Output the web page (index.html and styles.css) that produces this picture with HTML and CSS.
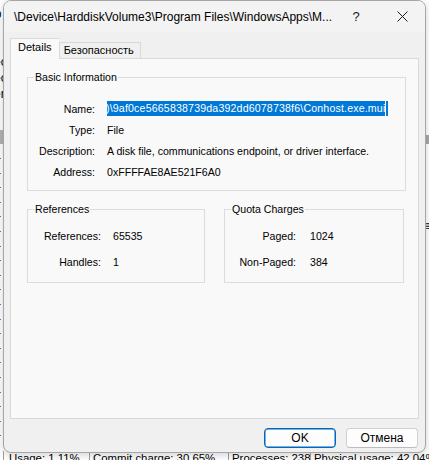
FILE: index.html
```html
<!DOCTYPE html>
<html>
<head>
<meta charset="utf-8">
<link rel="stylesheet" href="styles.css">
</head>
<body>
<div class="desk">
  <div class="app">
    <div class="applist">
      <div class="frag">op</div>
      <div class="frag">lo</div>
      <div class="frag">isl</div>
      <div class="frag">sec</div>
      <div class="frag">sec</div>
      <div class="frag">ver</div>
      <div class="selrow"></div>
      <div class="dots"></div>
    </div>
    <div class="rightstrip">
      <div class="rblock"></div>
      <div class="rglyph">≡</div>
    </div>
    <div class="status">
      <span class="seg s1">Usage: 1.11%</span>
      <span class="seg s2">Commit charge: 30.65%</span>
      <span class="seg s3">Processes: 238</span>
      <span class="seg s4">Physical usage: 42.04%</span>
    </div>
  </div>

  <div class="dialog">
    <div class="titlebar">
      <span class="title">\Device\HarddiskVolume3\Program Files\WindowsApps\M...</span>
      <span class="capbtn help">?</span>
      <span class="capbtn close">
        <svg width="11" height="11" viewBox="0 0 11 11"><path d="M0.5 0.5 L10.5 10.5 M10.5 0.5 L0.5 10.5" stroke="#1b1b1b" stroke-width="1" fill="none"/></svg>
      </span>
    </div>
    <div class="client">
      <div class="tabs">
        <div class="tab active">Details</div>
        <div class="tab">Безопасность</div>
      </div>
      <div class="panel">
        <fieldset class="group basic">
          <legend>Basic Information</legend>
          <div class="grid g-basic">
            <span class="lbl">Name:</span>
            <span class="val"><span class="sel"><span class="seltext">)\9af0ce5665838739da392dd6078738f6\Conhost.exe.mui</span></span></span>
            <span class="lbl">Type:</span>
            <span class="val">File</span>
            <span class="lbl">Description:</span>
            <span class="val">A disk file, communications endpoint, or driver interface.</span>
            <span class="lbl">Address:</span>
            <span class="val">0xFFFFAE8AE521F6A0</span>
          </div>
        </fieldset>
        <div class="pair">
          <fieldset class="group refs">
            <legend>References</legend>
            <div class="grid g-refs">
              <span class="lbl">References:</span>
              <span class="val">65535</span>
              <span class="lbl">Handles:</span>
              <span class="val">1</span>
            </div>
          </fieldset>
          <fieldset class="group quota">
            <legend>Quota Charges</legend>
            <div class="grid g-quota">
              <span class="lbl">Paged:</span>
              <span class="val">1024</span>
              <span class="lbl">Non-Paged:</span>
              <span class="val">384</span>
            </div>
          </fieldset>
        </div>
      </div>
      <div class="buttons">
        <button class="btn default">OK</button>
        <button class="btn">Отмена</button>
      </div>
    </div>
  </div>
</div>
</body>
</html>
```

FILE: styles.css
```css
html, body {
  margin: 0;
  padding: 0;
}
body {
  width: 429px;
  height: 460px;
  overflow: hidden;
  background: #ffffff;
  font-family: "Liberation Sans", Arial, sans-serif;
  font-size: 10.6px;
  color: #000;
}
.desk {
  position: relative;
  width: 429px;
  height: 460px;
  overflow: hidden;
}
.app {
  display: flex;
  flex-direction: column;
  width: 429px;
  height: 460px;
  position: relative;
}
.applist {
  width: 40px;
  height: 451px;
  flex: none;
  position: relative;
}
.frag {
  font-size: 12px;
  line-height: 16px;
  margin-left: -12px;
  white-space: nowrap;
}
.applist .frag:first-child {
  margin-top: 6px;
}
.selrow {
  position: absolute;
  left: 0;
  top: 130px;
  width: 4px;
  height: 14px;
  background: #b3b3b3;
}
.dots {
  position: absolute;
  left: 0;
  top: 158px;
  width: 1px;
  height: 290px;
  background: repeating-linear-gradient(to bottom, #2f86d6 0, #2f86d6 1px, transparent 1px, transparent 14.6px);
}
.rightstrip {
  position: absolute;
  right: 0;
  top: 0;
  width: 4px;
  height: 450px;
}
.rblock {
  position: absolute;
  left: 0;
  top: 135px;
  width: 4px;
  height: 9px;
  background: #a8a8a8;
}
.rglyph {
  position: absolute;
  left: 0;
  top: 219px;
  font-size: 12px;
  line-height: 14px;
}
.status {
  display: flex;
  align-items: flex-start;
  height: 9px;
  flex: none;
  font-family: "Liberation Sans", Arial, sans-serif;
  font-size: 11.4px;
  line-height: 14px;
  color: #000;
  white-space: nowrap;
  padding-left: 3px;
}
.seg {
  flex: none;
  overflow: hidden;
  height: 14px;
  box-sizing: border-box;
  border-right: 1px solid #a0a0a0;
}
.s1 { width: 87px; padding-left: 5px; border-left: 1px solid #a0a0a0; }
.s2 { width: 139px; padding-left: 3px; }
.s3 { width: 82px; padding-left: 3px; }
.s4 { width: 120px; padding-left: 3px; border-right: none; }

.dialog {
  position: absolute;
  left: 3px;
  top: 0;
  width: 421px;
  height: 451px;
  border: 1px solid #a6a6a6;
  border-radius: 8px;
  background: #f0f0f0;
  box-shadow: 0 2px 8px rgba(0,0,0,0.18);
  display: flex;
  flex-direction: column;
  overflow: hidden;
}
.titlebar {
  height: 31px;
  flex: none;
  display: flex;
  align-items: center;
  background: #f3f3f3;
}
.title {
  flex: 1;
  padding-left: 10px;
  font-size: 12px;
  white-space: nowrap;
  overflow: hidden;
  color: #000;
}
.capbtn {
  width: 46px;
  height: 31px;
  flex: none;
  display: flex;
  align-items: center;
  justify-content: center;
  color: #1b1b1b;
}
.help {
  font-size: 13px;
}
.client {
  flex: 1;
  display: flex;
  flex-direction: column;
  padding: 7px 6px 0 6px;
}
.tabs {
  display: flex;
  align-items: flex-end;
  height: 19px;
  position: relative;
  z-index: 2;
}
.tab {
  height: 15px;
  line-height: 15px;
  padding: 0 4px;
  border: 1px solid #d9d9d9;
  border-bottom: none;
  background: #f0f0f0;
  font-size: 11px;
  white-space: nowrap;
}
.tab.active {
  height: 20px;
  line-height: 17px;
  background: #f9f9f9;
  padding: 0 7px;
  margin-bottom: -1px;
  border-right: none;
}
.tab + .tab {
  width: 72px;
}
.panel {
  box-sizing: border-box;
  height: 361px;
  flex: none;
  background: #f9f9f9;
  border: 1px solid #d9d9d9;
  padding: 12px 12px 0 16px;
  display: flex;
  flex-direction: column;
}
.group {
  margin: 0;
  padding: 0;
  border: 1px solid #dcdcdc;
  min-width: 0;
}
.group legend {
  margin-left: 6px;
  padding: 0 1px;
  line-height: 13px;
}
.grid {
  display: grid;
  align-items: center;
}
.lbl {
  text-align: right;
  white-space: nowrap;
}
.val {
  white-space: nowrap;
}
.g-basic {
  grid-template-columns: 67px 1fr;
  column-gap: 12px;
  grid-auto-rows: 21px;
  margin-top: 14px;
  padding-bottom: 8px;
}
.sel {
  display: inline-block;
  width: 281px;
  height: 15px;
  line-height: 15px;
  overflow: hidden;
  background: #0078d7;
  color: #ffffff;
  vertical-align: middle;
  white-space: nowrap;
}
.seltext {
  display: inline-block;
  margin-left: -1px;
  letter-spacing: 0.17px;
  border-right: 1px solid #ffffff;
  padding-right: 0;
}
.pair {
  display: flex;
  gap: 19px;
  margin-top: 12px;
}
.refs {
  width: 176px;
  flex: none;
}
.quota {
  width: 178px;
  flex: none;
}
.g-refs {
  grid-template-columns: 73px 1fr;
  column-gap: 12px;
  grid-auto-rows: 26px;
  margin-top: 7px;
  padding-bottom: 7px;
}
.g-quota {
  grid-template-columns: 71px 1fr;
  column-gap: 14px;
  grid-auto-rows: 26px;
  margin-top: 7px;
  padding-bottom: 7px;
}
.buttons {
  display: flex;
  justify-content: flex-end;
  gap: 10px;
  margin-top: 9px;
  padding-right: 1px;
}
.btn {
  font-family: "Liberation Sans", Arial, sans-serif;
  font-size: 12px;
  color: #000;
  height: 20px;
  width: 72px;
  padding: 0;
  background: #fdfdfd;
  border: 1px solid #d0d0d0;
  border-bottom-color: #bcbcbc;
  border-radius: 4px;
}
.btn.default {
  border: 1px solid #0067c0;
  box-shadow: inset 0 0 0 0.5px #0067c0;
}
```
